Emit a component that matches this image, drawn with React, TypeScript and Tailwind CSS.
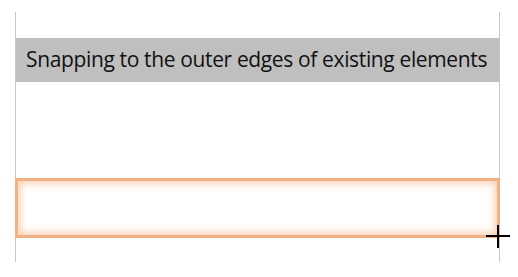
export default function App() {
  return (
    <div className="relative w-[518px] h-[277px] bg-white overflow-hidden">
      <div className="ml-[15px] mt-[12px] w-[485px] h-[250px] border-x border-[#c6c6c6] flex flex-col">
        <div className="mt-[26px] h-[44px] bg-[#bfbfbf] flex items-center pl-[10px]">
          <span className="text-[21px] text-[#111] tracking-[-0.36px]" style={{ fontFamily: '"Open Sans", sans-serif' }}>
            Snapping to the outer edges of existing elements
          </span>
        </div>
        <div className="mt-[96px] h-[60px] -ml-px -mr-px border-[3px] border-[#f0b186] shadow-[inset_0_0_7px_3px_#f8d3b6]" />
      </div>
      {/* cursor */}
      <div className="absolute left-[486px] top-[235px] w-[24px] h-[2px] bg-black" />
      <div className="absolute left-[497px] top-[225px] w-[2px] h-[23px] bg-black" />
    </div>
  )
}
